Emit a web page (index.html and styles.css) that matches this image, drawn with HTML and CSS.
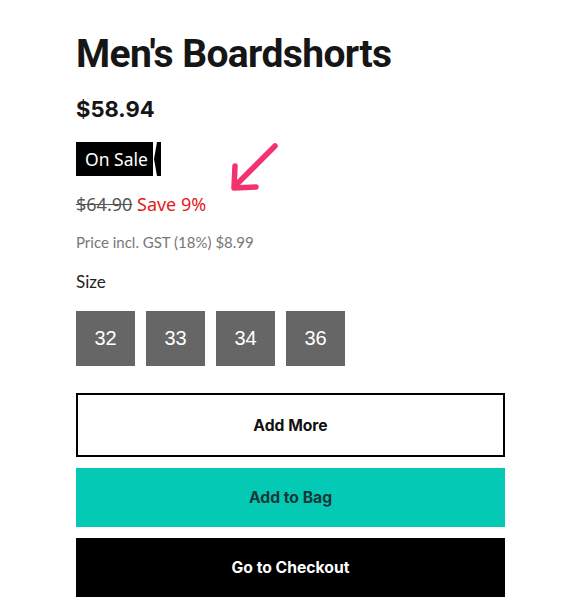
FILE: index.html
```
<!DOCTYPE html>
<html>
<head>
<meta charset="utf-8">
<link rel="stylesheet" href="styles.css">
</head>
<body>
<div class="product">
  <h1 class="title">Men's Boardshorts</h1>
  <div class="price">$58.94</div>
  <div class="badge-row">
    <span class="badge">On Sale</span><svg class="badge-tail" width="8" height="34" viewBox="0 0 8 34"><polygon points="4,0 8,0 8,34 4,34 1,17" fill="#000"/></svg>
    <svg class="arrow" width="60" height="56" viewBox="0 0 60 56"><g stroke="#f2336f" stroke-width="5.5" stroke-linecap="round" stroke-linejoin="round" fill="none"><line x1="52" y1="6" x2="15" y2="43"/><polyline points="12,26 11,48 33,47"/></g></svg>
  </div>
  <div class="sale-line"><span class="old">$64.90</span> <span class="save">Save 9%</span></div>
  <div class="tax">Price incl. GST (18%) $8.99</div>
  <div class="size-label">Size</div>
  <div class="sizes">
    <span class="size">32</span>
    <span class="size">33</span>
    <span class="size">34</span>
    <span class="size">36</span>
  </div>
  <div class="buttons">
    <button class="btn btn-outline">Add More</button>
    <button class="btn btn-teal">Add to Bag</button>
    <button class="btn btn-black">Go to Checkout</button>
  </div>
</div>
</body>
</html>
```
FILE: styles.css
```
html, body { margin: 0; padding: 0; background: #fff; }
.product { width: 429px; padding: 28px 0 0 76px; font-family: "Noto Sans", sans-serif; }
.title { margin: 0; font-family: "Roboto", sans-serif; font-weight: 700; font-size: 39px; line-height: 52px; color: #161616; letter-spacing: -0.6px; }
.price { margin-top: 15px; font-family: "Inter", sans-serif; font-weight: 700; font-size: 22px; line-height: 28px; color: #161616; }
.badge-row { position: relative; display: flex; align-items: center; margin-top: 19px; height: 34px; }
.badge { display: flex; align-items: center; height: 34px; padding: 0 7px 0 9px; background: #000; color: #fff; font-size: 17.5px; width: 61px; box-sizing: content-box; white-space: nowrap; }
.badge-tail { display: block; }
.arrow { position: absolute; left: 147px; top: -2px; }
.sale-line { margin-top: 14px; font-size: 18px; line-height: 28px; }
.old { color: #555; text-decoration: line-through; }
.save { color: #e21b1b; }
.tax { margin-top: 13px; font-family: "Lato", sans-serif; font-size: 15px; line-height: 22px; color: #777; }
.size-label { margin-top: 17px; font-family: "Lato", sans-serif; font-size: 17px; line-height: 24px; color: #222; }
.sizes { display: flex; gap: 11px; margin-top: 17px; }
.size { display: flex; align-items: center; justify-content: center; width: 59px; height: 55px; background: #666; color: #fff; font-family: "Liberation Sans", sans-serif; font-size: 20px; }
.buttons { display: flex; flex-direction: column; gap: 11px; margin-top: 27px; }
.btn { display: block; width: 429px; height: 59px; border: 0; padding: 0; font-family: "Inter", sans-serif; font-weight: 700; font-size: 15.7px; cursor: pointer; }
.btn-outline { height: 64px; background: #fff; border: 2px solid #000; color: #111; }
.btn-teal { background: #04c9b5; color: #163836; }
.btn-black { background: #000; color: #fff; }
```
